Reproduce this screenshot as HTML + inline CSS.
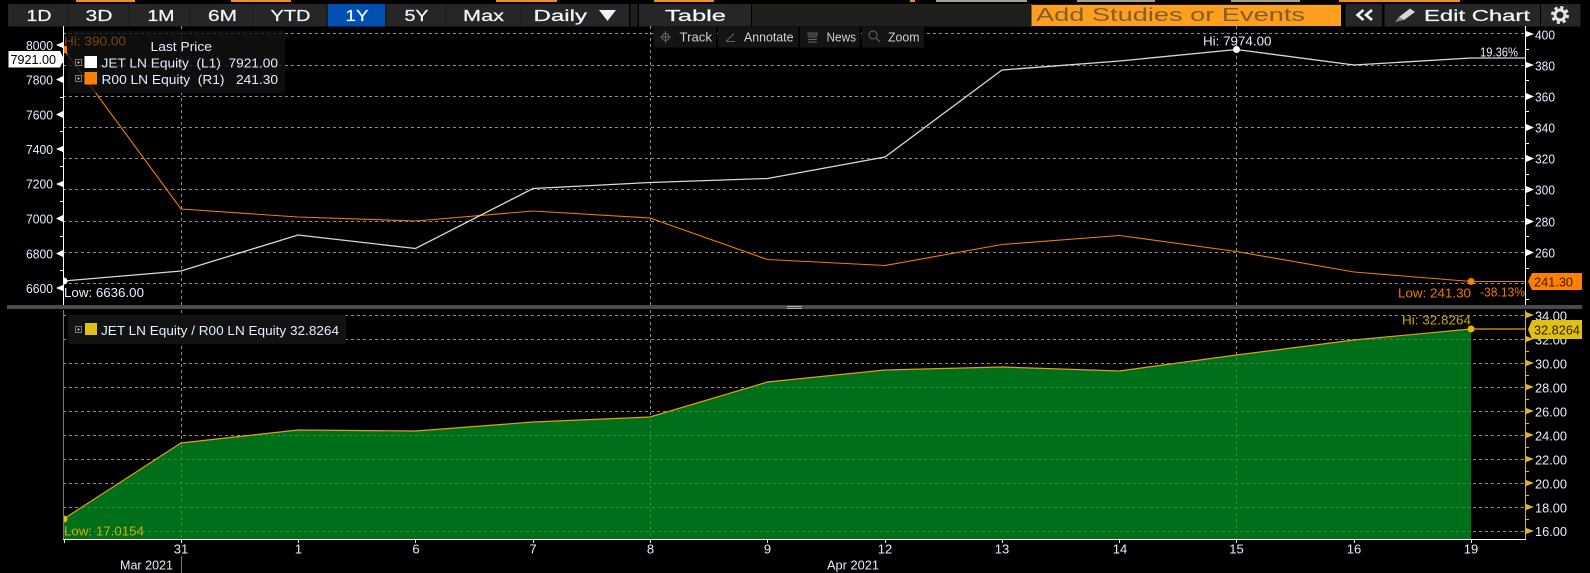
<!DOCTYPE html>
<html><head><meta charset="utf-8"><style>
html,body{margin:0;padding:0;background:#000;width:1590px;height:573px;overflow:hidden}
svg{display:block}
text{font-family:"Liberation Sans",sans-serif;font-size:13px;fill:#e2efff}
.b text{font-size:15.5px;fill:#eef5ff;stroke:#eef5ff;stroke-width:.25}
.g{stroke:#8d8d8d;stroke-dasharray:3 3;stroke-width:1;fill:none;shape-rendering:crispEdges}
.w{stroke:#fff;stroke-width:1;fill:none;shape-rendering:crispEdges}
.y{stroke:#e0b810;stroke-width:1;fill:none;shape-rendering:crispEdges}
.t text{font-size:13px;fill:#d0d0d0}
</style></head><body>
<svg width="1590" height="573" viewBox="0 0 1590 573" xmlns="http://www.w3.org/2000/svg">
<rect width="1590" height="573" fill="#000"/>
<!-- top fragments -->
<g fill="#f28c1e"><rect x="76" y="0" width="59" height="2"/><rect x="231" y="0" width="60" height="2"/><rect x="496" y="0" width="61" height="2"/><rect x="654" y="0" width="60" height="2"/><rect x="910" y="0" width="5" height="2"/><rect x="1339" y="0" width="121" height="2"/></g>
<g fill="#a89c8c"><rect x="936" y="0" width="91" height="2"/><rect x="1077" y="0" width="78" height="2"/><rect x="1231" y="0" width="69" height="2"/></g>
<!-- toolbar -->
<rect x="8" y="4" width="1572" height="22.500" fill="#1f1f1b"/>
<g fill="#262626"><rect x="8.500" y="4" width="59" height="22.500"/><rect x="69" y="4" width="59" height="22.500"/><rect x="129.500" y="4" width="59.500" height="22.500"/><rect x="191" y="4" width="61" height="22.500"/><rect x="253.500" y="4" width="72.500" height="22.500"/><rect x="387" y="4" width="58.500" height="22.500"/><rect x="447" y="4" width="73.500" height="22.500"/><rect x="522" y="4" width="107" height="22.500"/><rect x="639" y="4" width="112" height="22.500"/><rect x="1345.500" y="4" width="36.500" height="22.500"/><rect x="1384.500" y="4" width="155.500" height="22.500"/><rect x="1541" y="4" width="39.500" height="22.500"/></g>
<rect x="629" y="4" width="1.500" height="22.500" fill="#000"/><rect x="637.500" y="4" width="1.500" height="22.500" fill="#000"/><rect x="751" y="4" width="1" height="22.500" fill="#000"/>
<rect x="1341" y="4" width="4.500" height="22.500" fill="#000"/><rect x="1382" y="4" width="2.500" height="22.500" fill="#000"/><rect x="1540" y="4" width="1" height="22.500" fill="#000"/>
<rect x="328" y="4" width="57" height="22.500" fill="#0050b4"/>
<rect x="1032" y="5" width="309" height="21" fill="#ff9e1f"/><rect x="1031" y="4" width="1" height="22.500" fill="#8a5a10"/>
<g class="b">
<text x="26.500" y="21" textLength="25" lengthAdjust="spacingAndGlyphs">1D</text>
<text x="85.500" y="21" textLength="27" lengthAdjust="spacingAndGlyphs">3D</text>
<text x="147.500" y="21" textLength="27" lengthAdjust="spacingAndGlyphs">1M</text>
<text x="208" y="21" textLength="29" lengthAdjust="spacingAndGlyphs">6M</text>
<text x="270.500" y="21" textLength="40" lengthAdjust="spacingAndGlyphs">YTD</text>
<text x="345.500" y="21" textLength="23" lengthAdjust="spacingAndGlyphs">1Y</text>
<text x="404.500" y="21" textLength="24" lengthAdjust="spacingAndGlyphs">5Y</text>
<text x="463" y="21" textLength="41" lengthAdjust="spacingAndGlyphs">Max</text>
<text x="533.500" y="21" textLength="53.500" lengthAdjust="spacingAndGlyphs">Daily</text>
<text x="665" y="21" textLength="61" lengthAdjust="spacingAndGlyphs">Table</text>
<text x="1036" y="21" textLength="269" lengthAdjust="spacingAndGlyphs" style="font-size:18px;fill:#80602a;stroke:none">Add Studies or Events</text>
<text x="1424" y="21" textLength="106" lengthAdjust="spacingAndGlyphs">Edit Chart</text>
</g>
<polygon points="599,10 616,10 607.500,21" fill="#eef5ff"/>
<path d="M1363.500 10l-6 5 6 5M1372 10l-6 5 6 5" stroke="#eef5ff" stroke-width="2.600" fill="none"/>
<path d="M1399 17l11-8.500 5 3.500-11 8z" fill="#d8d8d8"/><path d="M1395 22l4-5 5 3z" fill="#8a8a8a"/>
<circle cx="1560" cy="15" r="5" fill="none" stroke="#e4e4e4" stroke-width="3"/>
<circle cx="1560" cy="15" r="7.500" fill="none" stroke="#e4e4e4" stroke-width="3" stroke-dasharray="3.100 2.800"/>
<!-- grid top -->
<path class="g" d="M63 33.500H1525M63 65.500H1525M63 96.500H1525M63 127.500H1525M63 158.500H1525M63 189.500H1525M63 221.500H1525M63 252.500H1525M63 283.500H1525"/>
<path class="g" d="M181.500 26V305M650.500 26V305M1236.500 26V305"/>
<!-- grid lower -->
<path class="g" d="M63 315.500H1525M63 339.500H1525M63 363.500H1525M63 387.500H1525M63 411.500H1525M63 435.500H1525M63 459.500H1525M63 483.500H1525M63 507.500H1525M63 531.500H1525"/>
<path class="g" d="M181.500 310V539M650.500 310V539M1236.500 310V539"/>
<!-- area -->
<polygon points="63.500,519 181,443 298,430 415.500,431 533,422 650,417 767.500,382 885,370 1002,367 1119.500,371 1236.500,355 1354,340 1471,329 1471,539 63.500,539" fill="#006f1a"/>
<g style="stroke:#2c8f45;stroke-dasharray:3 3;fill:none;shape-rendering:crispEdges"><path d="M64 531.500H1471M82 507.500H1471M119 483.500H1471M156 459.500H1471M253 435.500H1471M671 411.500H1471M750 387.500H1471M1178 363.500H1471M1360 339.500H1471M181.500 445V539M650.500 419V539M1236.500 357V539"/></g>
<polyline points="63.500,519 181,443 298,430 415.500,431 533,422 650,417 767.500,382 885,370 1002,367 1119.500,371 1236.500,355 1354,340 1471,329 1525,329" fill="none" stroke="#e0a010" stroke-width="1.200"/>
<!-- series -->
<polyline points="63.500,49 181,209 298,217 415.500,221 533,211 650,218 767.500,259.500 885,265.500 1002,244.500 1119.500,235.500 1236.500,251.500 1354,272 1471,281.500 1525,281.500" fill="none" stroke="#f07d00" stroke-width="1.100"/>
<polyline points="63.500,281 181,271 298,235 415.500,248.500 533,188.500 650,182.500 767.500,178.500 885,157 1002,70 1119.500,61 1236.500,49.500 1354,65 1471,58 1525,58" fill="none" stroke="#d8d8d8" stroke-width="1.300"/>
<!-- dots -->
<circle cx="1236.500" cy="49.500" r="3.500" fill="#fff"/>
<circle cx="1471" cy="281.500" r="3.500" fill="#ff8000"/>
<circle cx="1471" cy="329" r="3.500" fill="#e0b810"/>
<path d="M64 277.500a3.500 3.500 0 0 1 0 7z" fill="#fff"/><path d="M64 515.500a3.500 3.500 0 0 1 0 7z" fill="#e0b810"/>
<rect x="63" y="46" width="4" height="7" fill="#ff8000"/>
<!-- divider -->
<rect x="7" y="305" width="1575" height="4" fill="#4a4a4a"/>
<rect x="787" y="306" width="15" height="1" fill="#aaa"/><rect x="787" y="308" width="15" height="1" fill="#aaa"/>
<!-- axes -->
<path class="w" d="M63.500 26V305M1525.500 26V305M63 539.500H1526M1525.500 510V539"/>
<path d="M63.500 310V539" stroke="#777" fill="none" shape-rendering="crispEdges"/>
<path class="y" d="M1525.500 310V539"/>
<!-- left ticks -->
<g fill="#fff"><polygon points="63,42 56,45 63,48"/><polygon points="63,76 56,79.500 63,83"/><polygon points="63,111 56,114.500 63,118"/><polygon points="63,146 56,149 63,152"/><polygon points="63,181 56,184 63,187"/><polygon points="63,215 56,218.500 63,222"/><polygon points="63,250 56,253.500 63,257"/><polygon points="63,285 56,288 63,291"/></g>
<path class="w" d="M60 62.500H63M60 97.500H63M60 131.500H63M60 166.500H63M60 201.500H63M60 236.500H63M60 270.500H63"/>
<!-- right ticks -->
<g fill="#fff"><polygon points="1526,31 1534,34 1526,37"/><polygon points="1526,62 1534,65 1526,68"/><polygon points="1526,93 1534,96.500 1526,100"/><polygon points="1526,124 1534,127.500 1526,131"/><polygon points="1526,155 1534,158.500 1526,162"/><polygon points="1526,186 1534,189.500 1526,193"/><polygon points="1526,218 1534,221.500 1526,225"/><polygon points="1526,249 1534,252.500 1526,256"/></g>
<path class="w" d="M1526 49.500H1529M1526 80.500H1529M1526 111.500H1529M1526 143.500H1529M1526 174.500H1529M1526 205.500H1529M1526 236.500H1529M1526 268.500H1529M1526 299.500H1529"/>
<!-- lower right ticks -->
<g fill="#e0b810"><polygon points="1526,312 1534,315 1526,318"/><polygon points="1526,336 1534,339 1526,342"/><polygon points="1526,360 1534,363 1526,366"/><polygon points="1526,384 1534,387 1526,390"/><polygon points="1526,408 1534,411 1526,414"/><polygon points="1526,432 1534,435 1526,438"/><polygon points="1526,456 1534,459 1526,462"/><polygon points="1526,480 1534,483 1526,486"/><polygon points="1526,504 1534,507 1526,510"/><polygon points="1526,528 1534,531 1526,534"/></g>
<path class="y" d="M1526 351.500H1529M1526 375.500H1529M1526 399.500H1529M1526 423.500H1529M1526 447.500H1529M1526 471.500H1529M1526 495.500H1529M1526 519.500H1529"/>
<!-- bottom ticks -->
<path class="w" d="M64.500 540V543M181.500 540V543M298.500 540V543M415.500 540V543M533.500 540V543M650.500 540V543M767.500 540V543M885.500 540V543M1002.500 540V543M1119.500 540V543M1236.500 540V543M1354.500 540V543M1471.500 540V543"/>
<path d="M181.500 556V573" stroke="#777" fill="none" shape-rendering="crispEdges"/>
<!-- left labels -->
<text x="26" y="50" textLength="27" lengthAdjust="spacingAndGlyphs">8000</text><text x="26" y="84.500" textLength="27" lengthAdjust="spacingAndGlyphs">7800</text><text x="26" y="119.500" textLength="27" lengthAdjust="spacingAndGlyphs">7600</text><text x="26" y="154" textLength="27" lengthAdjust="spacingAndGlyphs">7400</text><text x="26" y="188.500" textLength="27" lengthAdjust="spacingAndGlyphs">7200</text><text x="26" y="223.500" textLength="27" lengthAdjust="spacingAndGlyphs">7000</text><text x="26" y="258.500" textLength="27" lengthAdjust="spacingAndGlyphs">6800</text><text x="26" y="293" textLength="27" lengthAdjust="spacingAndGlyphs">6600</text>
<!-- right labels -->
<text x="1535" y="39.500" textLength="20" lengthAdjust="spacingAndGlyphs">400</text><text x="1535" y="70.500" textLength="20" lengthAdjust="spacingAndGlyphs">380</text><text x="1535" y="101.500" textLength="20" lengthAdjust="spacingAndGlyphs">360</text><text x="1535" y="132.500" textLength="20" lengthAdjust="spacingAndGlyphs">340</text><text x="1535" y="163.500" textLength="20" lengthAdjust="spacingAndGlyphs">320</text><text x="1535" y="194.500" textLength="20" lengthAdjust="spacingAndGlyphs">300</text><text x="1535" y="226.500" textLength="20" lengthAdjust="spacingAndGlyphs">280</text><text x="1535" y="257.500" textLength="20" lengthAdjust="spacingAndGlyphs">260</text>
<text x="1535" y="320.500" textLength="32" lengthAdjust="spacingAndGlyphs">34.00</text><text x="1535" y="344.500" textLength="32" lengthAdjust="spacingAndGlyphs">32.00</text><text x="1535" y="368.500" textLength="32" lengthAdjust="spacingAndGlyphs">30.00</text><text x="1535" y="392.500" textLength="32" lengthAdjust="spacingAndGlyphs">28.00</text><text x="1535" y="416.500" textLength="32" lengthAdjust="spacingAndGlyphs">26.00</text><text x="1535" y="440.500" textLength="32" lengthAdjust="spacingAndGlyphs">24.00</text><text x="1535" y="464.500" textLength="32" lengthAdjust="spacingAndGlyphs">22.00</text><text x="1535" y="488.500" textLength="32" lengthAdjust="spacingAndGlyphs">20.00</text><text x="1535" y="512.500" textLength="32" lengthAdjust="spacingAndGlyphs">18.00</text><text x="1535" y="536" textLength="32" lengthAdjust="spacingAndGlyphs">16.00</text>
<!-- x labels -->
<g text-anchor="middle"><text x="181" y="553.500">31</text><text x="298.500" y="553.500">1</text><text x="416" y="553.500">6</text><text x="533" y="553.500">7</text><text x="650.500" y="553.500">8</text><text x="767.500" y="553.500">9</text><text x="885" y="553.500">12</text><text x="1002" y="553.500">13</text><text x="1120" y="553.500">14</text><text x="1236.500" y="553.500">15</text><text x="1354" y="553.500">16</text><text x="1471" y="553.500">19</text></g>
<text x="120" y="569.500" textLength="53" lengthAdjust="spacingAndGlyphs">Mar 2021</text><text x="827" y="569.500" textLength="52" lengthAdjust="spacingAndGlyphs">Apr 2021</text>
<!-- legend top -->
<rect x="67.500" y="30.500" width="217.500" height="62.500" rx="3" fill="#121212" fill-opacity=".8"/>
<text x="64" y="45.500" textLength="62" lengthAdjust="spacingAndGlyphs" style="fill:#7a4410">Hi: 390.00</text>
<text x="150.500" y="51" textLength="61.500" lengthAdjust="spacingAndGlyphs">Last Price</text>
<rect x="75.500" y="59.500" width="6" height="6" fill="none" stroke="#777"/><path d="M77 62.500h3M78.500 61v3" stroke="#999"/>
<rect x="75.500" y="75.500" width="6" height="6" fill="none" stroke="#777"/><path d="M77 78.500h3M78.500 77v3" stroke="#999"/>
<rect x="84.500" y="56" width="12.500" height="12" fill="#fff"/><rect x="84.500" y="72" width="12.500" height="12.500" fill="#ff8000"/>
<text x="101.500" y="67.500" textLength="176.500" lengthAdjust="spacingAndGlyphs">JET LN Equity&#160;&#160;(L1)&#160;&#160;7921.00</text>
<text x="101.500" y="84" textLength="176.500" lengthAdjust="spacingAndGlyphs">R00 LN Equity&#160;&#160;(R1)&#160;&#160;&#160;241.30</text>
<!-- legend lower -->
<rect x="68" y="315" width="278" height="29" rx="2" fill="#121212"/>
<rect x="75.500" y="326.500" width="6" height="6" fill="none" stroke="#777"/><path d="M77 329.500h3M78.500 328v3" stroke="#999"/>
<rect x="85" y="323" width="12" height="12" fill="#e0c010"/>
<text x="101" y="335" textLength="238" lengthAdjust="spacingAndGlyphs">JET LN Equity / R00 LN Equity 32.8264</text>
<!-- chart mini toolbar -->
<g fill="#141414"><rect x="653.500" y="27" width="62.500" height="20.500"/><rect x="718" y="27" width="80" height="20.500"/><rect x="800" y="27" width="59.500" height="20.500"/><rect x="862" y="27" width="62" height="20.500"/></g>
<g class="t"><text x="679.500" y="41.500" textLength="32.500" lengthAdjust="spacingAndGlyphs">Track</text><text x="744" y="41.500" textLength="49.500" lengthAdjust="spacingAndGlyphs">Annotate</text><text x="826.500" y="41.500" textLength="29.500" lengthAdjust="spacingAndGlyphs">News</text><text x="888" y="41.500" textLength="31.500" lengthAdjust="spacingAndGlyphs">Zoom</text></g>
<path d="M665.500 31v12M660 37h11" stroke="#666"/><circle cx="665.500" cy="37" r="3.500" fill="none" stroke="#666"/>
<path d="M726 41.500h9M726 41.500l8-8" stroke="#666" fill="none"/>
<path d="M808 33h9v2h-9zM808 37h9M808 39.500h9M808 42h9" stroke="#666" fill="none"/>
<circle cx="873" cy="35" r="4" fill="none" stroke="#666"/><path d="M876 38l4 4" stroke="#666"/>
<!-- annotations -->
<text x="1203" y="45.500" textLength="68.500" lengthAdjust="spacingAndGlyphs">Hi: 7974.00</text>
<text x="1480" y="56.500" textLength="38" lengthAdjust="spacingAndGlyphs">19.36%</text>
<text x="64" y="297" textLength="80" lengthAdjust="spacingAndGlyphs">Low: 6636.00</text>
<text x="1398" y="297.500" textLength="73" lengthAdjust="spacingAndGlyphs" style="fill:#f07800">Low: 241.30</text>
<text x="1480" y="296.500" textLength="45" lengthAdjust="spacingAndGlyphs" style="fill:#f07800">-38.13%</text>
<text x="1402" y="324.500" textLength="69" lengthAdjust="spacingAndGlyphs" style="fill:#c8a800">Hi: 32.8264</text>
<text x="64" y="535.500" textLength="80" lengthAdjust="spacingAndGlyphs" style="fill:#d8a800">Low: 17.0154</text>
<!-- price tags -->
<polygon points="8.500,51 60,51 64,59 60,67.500 8.500,67.500" fill="#fff"/>
<text x="10.500" y="64" textLength="45.500" lengthAdjust="spacingAndGlyphs" style="fill:#000">7921.00</text>
<polygon points="1532,273 1582,273 1582,290 1532,290 1528,281.500" fill="#ff8000"/>
<text x="1534" y="286.500" textLength="39" lengthAdjust="spacingAndGlyphs" style="fill:#3a1c00">241.30</text>
<polygon points="1532,320 1582,320 1582,339 1532,339 1528,329.500" fill="#e2c012"/>
<text x="1534" y="334.500" textLength="46" lengthAdjust="spacingAndGlyphs" style="fill:#2a2400">32.8264</text>
</svg>
</body></html>
